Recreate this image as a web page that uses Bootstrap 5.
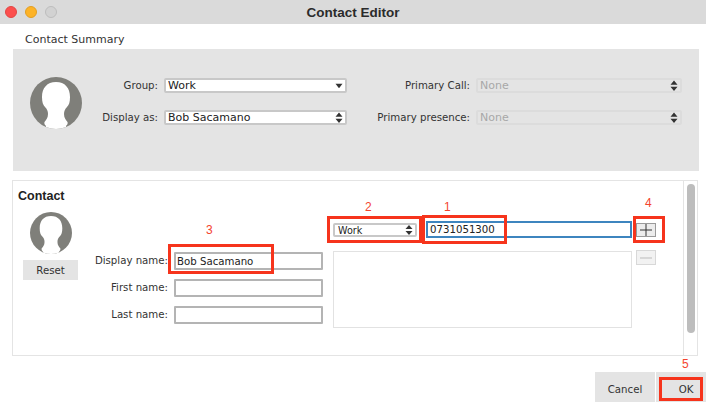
<!DOCTYPE html>
<html lang="en">
<head>
    <meta charset="UTF-8">
    <meta name="viewport" content="width=device-width, initial-scale=1.0">
    <title>Contact Editor</title>
    <link href="https://cdn.jsdelivr.net/npm/bootstrap@5.3.0/dist/css/bootstrap.min.css" rel="stylesheet">
    <style>
        body {
            background-color: #fff;
            color: #333;
            font-family: "DejaVu Sans", sans-serif;
            font-size: 10.2px;
            line-height: 13px;
        }
        .app-window {
            position: relative;
            width: 706px;
            height: 402px;
            overflow: hidden;
        }
        .title-bar {
            display: grid;
            grid-template-columns: 1fr auto 1fr;
            align-items: center;
            height: 24px;
            background-color: #dadada;
        }
        .lights { padding-left: 5px; }
        .title-text {
            font-family: "Liberation Sans", sans-serif;
            font-size: 13.5px;
            font-weight: 700;
            color: #2b2b2b;
        }
        .light {
            width: 12px;
            height: 12px;
            border-radius: 50%;
        }
        .light-red { background-color: #fc4f4d; border: 1px solid #e24643; }
        .light-amber { background-color: #fdb327; border: 1px solid #e29f22; }
        .light-off { background-color: #d2d2d2; border: 1px solid #bdbdbd; }
        .summary-title {
            font-size: 11px;
            padding: 9px 0 3px 25px;
            height: 25px;
        }
        .summary-panel {
            margin-left: 13px;
            width: 686px;
            height: 122px;
            padding: 28px 0 0 17px;
            background-color: #e4e4e4;
        }
        .summary-grid {
            display: grid;
            grid-template-columns: 82px 183px 129px 206px;
            grid-auto-rows: 15px;
            row-gap: 17px;
            align-self: flex-start;
            padding-top: 1px;
        }
        .field-label {
            text-align: right;
            padding-right: 6px;
            white-space: nowrap;
            line-height: 15px;
        }
        .mac-select {
            height: 15px;
            padding: 0 14px 0 2px;
            border: 2px solid #c8c8c8;
            border-radius: 2px;
            font-size: 11px;
            line-height: 11px;
            color: #222;
            background-color: #fff;
            background-size: 8px 12px;
            background-position: right 2px center;
            background-image: url("data:image/svg+xml,%3Csvg xmlns='http://www.w3.org/2000/svg' viewBox='0 0 8 12'%3E%3Cpath d='M4 1 7.500 5H.5zM4 11 .5 7h7z' fill='%23333'/%3E%3C/svg%3E");
        }
        .mac-select:focus { box-shadow: none; border-color: #c8c8c8; }
        .select-down {
            background-image: url("data:image/svg+xml,%3Csvg xmlns='http://www.w3.org/2000/svg' viewBox='0 0 8 12'%3E%3Cpath d='M.5 4h7L4 8.500z' fill='%23333'/%3E%3C/svg%3E");
        }
        .mac-select:disabled {
            background-color: #e4e4e4;
            border-color: #dcdcdc;
            color: #a8a8a8;
            opacity: 1;
        }
        .select-small {
            width: 84px;
            height: 14px;
            font-size: 9.6px;
            padding-left: 3px;
        }
        .contact-panel {
            margin: 9px 0 0 12px;
            width: 686px;
            height: 176px;
            border: 1px solid #e4e4e4;
        }
        .contact-main { width: 670px; }
        .contact-heading {
            font-family: "Liberation Sans", sans-serif;
            font-size: 12.5px;
            font-weight: 700;
            line-height: 13px;
            color: #222;
            padding: 9px 0 0 5px;
        }
        .contact-body { margin-top: -1px; }
        .avatar-col {
            width: 55px;
            margin-left: 10px;
            margin-top: 10px;
        }
        .avatar-large { width: 52px; height: 52px; display: block; }
        .avatar-small { width: 42px; height: 42px; display: block; margin: 0 auto 6px; }
        .reset-btn, .footer-btn {
            border: 0;
            border-radius: 0;
            background-color: #e4e4e4;
            color: #333;
            font-size: 10.2px;
        }
        .reset-btn { width: 55px; height: 20px; padding: 2px 0 0; }
        .name-fields {
            display: grid;
            grid-template-columns: 96px 149px;
            grid-auto-rows: 18px;
            row-gap: 9px;
            align-self: flex-start;
            margin-top: 50px;
        }
        .name-fields .field-label { line-height: 17px; }
        .plain-input {
            height: 18px;
            min-height: 0;
            padding: 0 1px;
            border: 2px solid #b4b4b4;
            border-radius: 1px;
            font-size: 10.2px;
            line-height: 14px;
            color: #222;
        }
        .phone-col {
            width: 323px;
            margin-left: 10px;
            margin-top: 19px;
        }
        .phone-row { height: 17px; }
        .phone-input {
            width: 206px;
            height: 17px;
            min-height: 0;
            margin-left: 9px;
            padding: 0 2px;
            border: 2px solid #3e85bf;
            border-radius: 0;
            font-size: 10.2px;
            line-height: 13px;
            color: #222;
        }
        .phone-input:focus { border-color: #3e85bf; box-shadow: none; }
        .square-btn {
            width: 20px;
            height: 14px;
            margin-left: 4px;
            padding: 0;
            border: 1px solid #9a9a9a;
            border-radius: 0;
            background-color: #ececec;
            line-height: 0;
        }
        .square-btn:disabled {
            border-color: #d8d8d8;
            background-color: #f2f2f2;
            opacity: 1;
        }
        .phone-list {
            width: 299px;
            height: 77px;
            border: 1px solid #e2e2e2;
        }
        .list-row { margin-top: 13px; }
        .minus-btn { height: 15px; margin-top: -1px; }
        .scroll-track {
            width: 14px;
            border-left: 1px solid #e4e4e4;
            padding: 3px 2px 0 3px;
        }
        .scroll-thumb {
            width: 8px;
            height: 149px;
            border-radius: 4px;
            background-color: #bdbdbd;
        }
        .footer-row {
            margin-top: 16px;
            height: 30px;
        }
        .footer-btn {
            height: 30px;
            padding: 6px 0 0;
        }
        .btn-cancel { width: 60px; margin-right: 1px; }
        .btn-ok { width: 50px; padding-left: 10px; }
        .mark-box {
            position: absolute;
            border: 3px solid #f6341c;
            pointer-events: none;
        }
        .mark-num {
            position: absolute;
            color: #f4442e;
            font-family: "Liberation Sans", sans-serif;
            font-size: 12px;
            line-height: 12px;
        }
        .box-1 { left: 422px; top: 215px; width: 85px; height: 29px; }
        .box-2 { left: 327px; top: 216px; width: 95px; height: 27px; }
        .box-3 { left: 168px; top: 244px; width: 106px; height: 30px; }
        .box-4 { left: 633px; top: 216px; width: 32px; height: 27px; }
        .box-5 { left: 659px; top: 377px; width: 44px; height: 24px; }
        .num-1 { left: 444px; top: 201px; }
        .num-2 { left: 365px; top: 201px; }
        .num-3 { left: 206px; top: 224px; }
        .num-4 { left: 645px; top: 197px; }
        .num-5 { left: 682px; top: 358px; }
    </style>
</head>
<body>
    <div class="app-window">
        <svg width="0" height="0" class="d-block">
            <symbol id="avatar" viewBox="0 0 52 52">
                <clipPath id="avatar-clip"><circle cx="26" cy="26" r="26"/></clipPath>
                <circle cx="26" cy="26" r="26" fill="#7f7f7a"/>
                <path clip-path="url(#avatar-clip)" d="M26 5C17 5 12 11 12 20c0 5 1 8 3 10 2 2 3 4 3 7 0 4-2 6-3.500 8-.5 2 .5 3 1.500 4v5h20v-5c1-1 2-2 1.500-4-1.500-2-3.500-4-3.500-8 0-3 1-5 3-7 2-2 3-5 3-10 0-9-5-15-14-15z" fill="#fff"/>
            </symbol>
        </svg>

        <div class="title-bar">
            <div class="lights d-flex gap-2">
                <span class="light light-red"></span>
                <span class="light light-amber"></span>
                <span class="light light-off"></span>
            </div>
            <div class="title-text">Contact Editor</div>
            <div></div>
        </div>

        <div class="summary-title">Contact Summary</div>
        <div class="summary-panel d-flex">
            <svg class="avatar-large flex-shrink-0"><use href="#avatar"/></svg>
            <div class="summary-grid">
                <label class="field-label">Group:</label>
                <select class="form-select mac-select select-down"><option>Work</option></select>
                <label class="field-label">Primary Call:</label>
                <select class="form-select mac-select" disabled><option>None</option></select>
                <label class="field-label">Display as:</label>
                <select class="form-select mac-select"><option>Bob Sacamano</option></select>
                <label class="field-label">Primary presence:</label>
                <select class="form-select mac-select" disabled><option>None</option></select>
            </div>
        </div>

        <div class="contact-panel d-flex">
            <div class="contact-main">
                <div class="contact-heading">Contact</div>
                <div class="contact-body d-flex">
                    <div class="avatar-col">
                        <svg class="avatar-small"><use href="#avatar"/></svg>
                        <button type="button" class="btn reset-btn">Reset</button>
                    </div>
                    <div class="name-fields">
                        <label class="field-label">Display name:</label>
                        <input type="text" class="form-control plain-input" value="Bob Sacamano">
                        <label class="field-label">First name:</label>
                        <input type="text" class="form-control plain-input">
                        <label class="field-label">Last name:</label>
                        <input type="text" class="form-control plain-input">
                    </div>
                    <div class="phone-col">
                        <div class="phone-row d-flex align-items-center">
                            <select class="form-select mac-select select-small flex-shrink-0"><option>Work</option></select>
                            <input type="text" class="form-control phone-input flex-shrink-0" value="0731051300">
                            <button type="button" class="btn square-btn flex-shrink-0">
                                <svg width="12" height="12" viewBox="0 0 12 12"><path d="M6 0v12M0 6h12" stroke="#333" stroke-width="1"/></svg>
                            </button>
                        </div>
                        <div class="list-row d-flex align-items-start">
                            <div class="phone-list flex-shrink-0"></div>
                            <button type="button" class="btn square-btn minus-btn flex-shrink-0" disabled>
                                <svg width="12" height="12" viewBox="0 0 12 12"><path d="M0 6h12" stroke="#bbb" stroke-width="1"/></svg>
                            </button>
                        </div>
                    </div>
                </div>
            </div>
            <div class="scroll-track"><div class="scroll-thumb"></div></div>
        </div>

        <div class="footer-row d-flex justify-content-end">
            <button type="button" class="btn footer-btn btn-cancel">Cancel</button>
            <button type="button" class="btn footer-btn btn-ok">OK</button>
        </div>

        <div class="mark-box box-1"></div>
        <div class="mark-box box-2"></div>
        <div class="mark-box box-3"></div>
        <div class="mark-box box-4"></div>
        <div class="mark-box box-5"></div>
        <span class="mark-num num-1">1</span>
        <span class="mark-num num-2">2</span>
        <span class="mark-num num-3">3</span>
        <span class="mark-num num-4">4</span>
        <span class="mark-num num-5">5</span>
    </div>
    <script src="https://cdn.jsdelivr.net/npm/bootstrap@5.3.0/dist/js/bootstrap.bundle.min.js"></script>
</body>
</html>
